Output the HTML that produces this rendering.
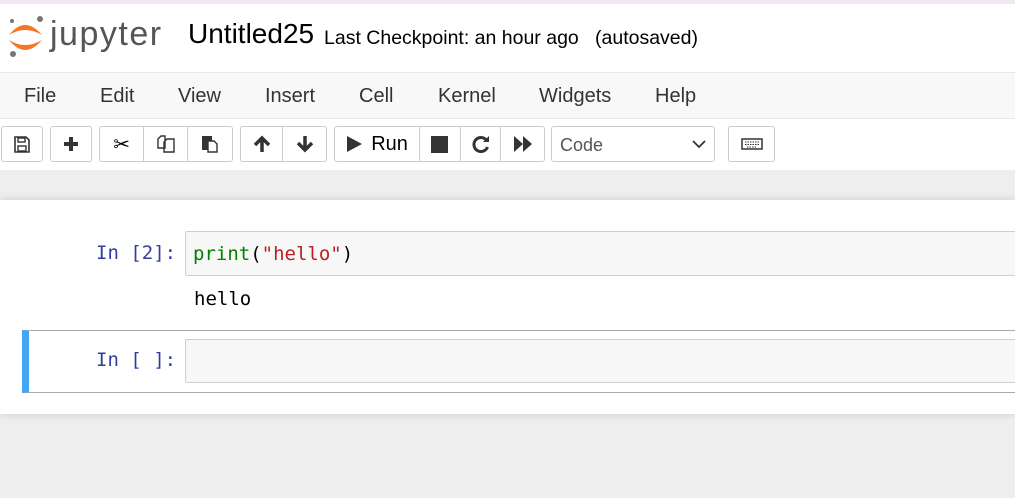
<!DOCTYPE html>
<html><head><style>
*{box-sizing:border-box;margin:0;padding:0}
body{width:1015px;height:498px;overflow:hidden;background:#eee;font-family:"Liberation Sans",sans-serif;position:relative}
.abs{position:absolute}
#hdr{left:0;top:0;width:1015px;height:72px;background:#fff;border-top:4px solid #f3e6f3}
#menu{left:0;top:72px;width:1015px;height:47px;background:#f8f8f8;border-top:1px solid #e7e7e7;border-bottom:1px solid #e7e7e7}
#menu span{position:absolute;top:12px;font-size:20px;color:#333}
#tb{left:0;top:119px;width:1015px;height:51px;background:#fff}
.b{position:absolute;top:126px;height:36px;border:1px solid #ccc;border-radius:3px;background:#fff;display:flex;align-items:center;justify-content:center;color:#333}
.g{position:absolute;top:126px;height:36px;border:1px solid #ccc;border-radius:3px;background:#fff;display:flex}
.g>div{height:100%;display:flex;align-items:center;justify-content:center;border-right:1px solid #ccc}
.g>div:last-child{border-right:none}
#nb{left:0;top:200px;width:1015px;height:214px;background:#fff;box-shadow:0 0 8px rgba(0,0,0,.15)}
.mono{font-family:"DejaVu Sans Mono","Liberation Mono",monospace;font-size:19px}
.prompt{color:#303f9f}
.inp{position:absolute;left:185px;width:840px;background:#f7f7f7;border:1px solid #cfcfcf;border-radius:2px}
</style></head><body>
<div id="hdr" class="abs">
<svg class="abs" style="left:6px;top:9px" width="40" height="46" viewBox="0 0 40 46">
<circle cx="34" cy="6" r="3" fill="#767677"/><circle cx="6" cy="8" r="2" fill="#767677"/><circle cx="7" cy="41" r="3" fill="#767677"/>
<path d="M3 22 Q19 2 36 22 Q19 12 3 22Z" fill="#f37726"/>
<path d="M3 27 Q19 47 36 27 Q19 37 3 27Z" fill="#f37726"/>
</svg>
<div class="abs" style="left:50px;top:11px;font-size:34px;color:#555;letter-spacing:1.5px">jupyter</div>
<div class="abs" style="left:188px;top:14px;font-size:28px;color:#000">Untitled25</div>
<div class="abs" style="left:324px;top:23px;font-size:19.5px;color:#000">Last Checkpoint: an hour ago&nbsp;&nbsp; (autosaved)</div>
</div>
<div id="menu" class="abs">
<span style="left:24px">File</span><span style="left:100px">Edit</span><span style="left:178px">View</span><span style="left:265px">Insert</span><span style="left:359px">Cell</span><span style="left:438px">Kernel</span><span style="left:539px">Widgets</span><span style="left:655px">Help</span>
</div>
<div id="tb" class="abs"></div>
<div class="b" style="left:1px;width:42px"><svg width="16" height="17" viewBox="0 0 16 17"><path d="M1 1h11l3 3v12H1Z" fill="none" stroke="#333" stroke-width="1.6"/><rect x="4" y="2" width="7" height="4" fill="none" stroke="#333" stroke-width="1.4"/><rect x="4" y="10" width="8" height="5" fill="none" stroke="#333" stroke-width="1.4"/></svg></div>
<div class="b" style="left:50px;width:42px"><svg width="16" height="16" viewBox="0 0 16 16"><path d="M8 1v14M1 8h14" stroke="#333" stroke-width="4"/></svg></div>
<div class="g" style="left:99px;width:134px"><div style="width:45px;font-size:20px">✂</div><div style="width:44px"><svg width="18" height="18" viewBox="0 0 18 18"><path d="M1 4l3-3h4v12H1Z M7 7l3-3h7v13H7Z" fill="#fff" stroke="#333" stroke-width="1.4"/></svg></div><div style="width:45px"><svg width="18" height="18" viewBox="0 0 18 18"><rect x="1" y="1" width="10" height="14" fill="#333"/><path d="M7 6h6l3 3v8H7Z" fill="#fff" stroke="#333" stroke-width="1.4"/></svg></div></div>
<div class="g" style="left:240px;width:87px"><div style="width:43px"><svg width="18" height="18" viewBox="0 0 18 18"><path d="M9 17V3M2 10l7-7 7 7" fill="none" stroke="#333" stroke-width="3.5"/></svg></div><div style="width:44px"><svg width="18" height="18" viewBox="0 0 18 18"><path d="M9 1v14M2 8l7 7 7-7" fill="none" stroke="#333" stroke-width="3.5"/></svg></div></div>
<div class="g" style="left:334px;width:211px"><div style="width:86px;font-size:20px"><svg width="16" height="18" viewBox="0 0 16 18" style="margin-right:9px"><path d="M1 1l15 8-15 8Z" fill="#333"/></svg>Run</div><div style="width:41px"><div style="width:17px;height:17px;background:#333"></div></div><div style="width:41px"><svg width="18" height="18" viewBox="0 0 18 18"><path d="M15 6A7 7 0 1 0 15.5 12" fill="none" stroke="#333" stroke-width="3"/><path d="M11 7h6V1Z" fill="#333"/></svg></div><div style="width:43px"><svg width="20" height="18" viewBox="0 0 20 18"><path d="M1 1l9 8-9 8ZM10 1l9 8-9 8Z" fill="#333"/></svg></div></div>
<div class="b" style="left:551px;width:164px;justify-content:space-between;padding:0 8px;font-size:18px;color:#555"><span style="margin-top:3px">Code</span><svg width="14" height="9" viewBox="0 0 14 9"><path d="M1 1l6 6 6-6" fill="none" stroke="#333" stroke-width="1.8"/></svg></div>
<div class="b" style="left:728px;width:47px"><svg width="22" height="12" viewBox="0 0 22 12"><rect x="1" y="1" width="20" height="10" fill="#fff" stroke="#333" stroke-width="1.5"/><path d="M4 4h14M4 6.5h14M6 9h10" stroke="#333" stroke-width="1" stroke-dasharray="1.5 1"/></svg></div>
<div id="nb" class="abs">
<div class="abs mono prompt" style="left:96px;top:42px">In [2]:</div>
<div class="inp" style="top:31px;height:45px"><div class="mono" style="position:absolute;left:7px;top:11px"><span style="color:#008000">print</span>(<span style="color:#ba2121">"hello"</span>)</div></div>
<div class="abs mono" style="left:194px;top:88px;color:#000">hello</div>
<div class="abs" style="left:22px;top:130px;width:1000px;height:63px;border:1px solid #ababab;border-left:7px solid #42a5f5"></div>
<div class="abs mono prompt" style="left:96px;top:149px">In [ ]:</div>
<div class="inp" style="top:139px;height:44px"></div>
</div>
</body></html>
